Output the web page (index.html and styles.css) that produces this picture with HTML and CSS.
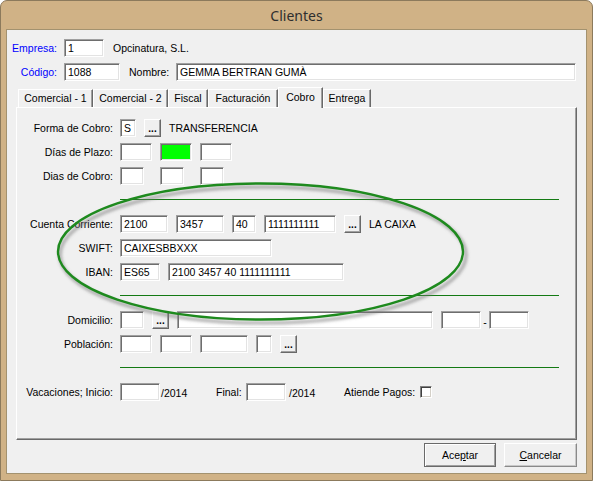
FILE: index.html
```html
<!DOCTYPE html>
<html lang="es">

<head>
    <meta charset="UTF-8">
    <meta name="viewport" content="width=device-width, initial-scale=1.0">
    <title>Clientes</title>
    <link rel="stylesheet" href="styles.css">
</head>

<body>
    <div class="window">
        <div class="titlebar">Clientes</div>
        <div class="client">
            <div class="head-row">
                <span class="head-label">Empresa:</span>
                <div class="field w40">1</div>
                <span class="note">Opcinatura, S.L.</span>
            </div>
            <div class="head-row">
                <span class="head-label">Código:</span>
                <div class="field w56">1088</div>
                <span class="name-label">Nombre:</span>
                <div class="field w400">GEMMA BERTRAN GUMÀ</div>
            </div>

            <div class="tabs">
                <div class="tab t75">Comercial - 1</div>
                <div class="tab t75">Comercial - 2</div>
                <div class="tab t40">Fiscal</div>
                <div class="tab t70">Facturación</div>
                <div class="tab t45 active">Cobro</div>
                <div class="tab t48">Entrega</div>
            </div>

            <div class="panel">
                <!-- forma de pago -->
                <div class="row">
                    <span class="lbl">Forma de Cobro:</span>
                    <div class="field w16">S</div>
                    <div class="dots">...</div>
                    <span>TRANSFERENCIA</span>
                </div>
                <div class="row">
                    <span class="lbl">Días de Plazo:</span>
                    <div class="field w32"></div>
                    <div class="field w32 green"></div>
                    <div class="field w32"></div>
                </div>
                <div class="row">
                    <span class="lbl">Dias de Cobro:</span>
                    <div class="field w24"></div>
                    <div class="field w24 skip"></div>
                    <div class="field w24 skip"></div>
                </div>
                <div class="rule"></div>

                <!-- datos bancarios -->
                <div class="row">
                    <span class="lbl">Cuenta Corriente:</span>
                    <div class="field w48">2100</div>
                    <div class="field w48">3457</div>
                    <div class="field w24">40</div>
                    <div class="field w72">1111111111</div>
                    <div class="dots">...</div>
                    <span>LA CAIXA</span>
                </div>
                <div class="row">
                    <span class="lbl">SWIFT:</span>
                    <div class="field w152">CAIXESBBXXX</div>
                </div>
                <div class="row">
                    <span class="lbl">IBAN:</span>
                    <div class="field w40">ES65</div>
                    <div class="field w176">2100 3457 40 1111111111</div>
                </div>
                <div class="rule"></div>

                <!-- direccion -->
                <div class="row">
                    <span class="lbl">Domicilio:</span>
                    <div class="field w24"></div>
                    <div class="dots">...</div>
                    <div class="field w256"></div>
                    <div class="field w40"></div>
                    <span class="dash">-</span>
                    <div class="field w40"></div>
                </div>
                <div class="row">
                    <span class="lbl">Población:</span>
                    <div class="field w32"></div>
                    <div class="field w32"></div>
                    <div class="field w48"></div>
                    <div class="field w16"></div>
                    <div class="dots">...</div>
                </div>
                <div class="rule"></div>

                <div class="row tight">
                    <span class="lbl">Vacaciones; Inicio:</span>
                    <div class="field w40"></div>
                    <span class="year">/2014</span>
                    <span class="final-lbl">Final:</span>
                    <div class="field w40"></div>
                    <span class="year year2">/2014</span>
                    <span class="pagos-lbl">Atiende Pagos:</span>
                    <div class="check"></div>
                </div>

                <svg class="mark" width="561" height="331" viewBox="0 0 561 331">
                    <defs>
                        <filter id="soft" x="-10%" y="-30%" width="120%" height="160%">
                            <feGaussianBlur stdDeviation="1.6" />
                        </filter>
                    </defs>
                    <ellipse cx="246" cy="147" rx="203" ry="68" fill="none" stroke="#777" stroke-opacity="0.55" stroke-width="3.5" filter="url(#soft)" />
                    <ellipse cx="243.5" cy="143.5" rx="202.5" ry="68" fill="none" stroke="#1e8a1e" stroke-width="2.4" />
                </svg>
            </div>

            <div class="buttons">
                <div class="btn default">Ace<u>p</u>tar</div>
                <div class="btn wide-btn"><u>C</u>ancelar</div>
            </div>
        </div>
    </div>
</body>

</html>
```

FILE: styles.css
```css
* {
    box-sizing: border-box;
}

body {
    margin: 0;
    font-family: "Liberation Sans", Arial, sans-serif;
    font-size: 10.5px;
    color: #000;
    background: #fff;
}

.window {
    width: 593px;
    height: 481px;
    background-color: #d0b286;
    border: 1px solid #8c7a5c;
    border-radius: 7px 7px 0 0;
    padding: 0 5px;
}

.titlebar {
    height: 28px;
    line-height: 30px;
    text-align: center;
    font-family: "Noto Sans", sans-serif;
    font-size: 14px;
    color: #2e2e2e;
}

.client {
    height: 445px;
    background-color: #f0f0f0;
    border: 1px solid #a3926f;
    padding-top: 9px;
}

/* top fields: empresa / codigo */

.head-row {
    display: flex;
    align-items: center;
    height: 18px;
    margin-bottom: 6px;
}

.head-label {
    width: 50px;
    margin-right: 7px;
    text-align: right;
    color: #0000ff;
}

.note {
    margin-left: 9px;
}

.name-label {
    width: 40px;
    margin-left: 9px;
    margin-right: 7px;
}

/* text boxes */

.field {
    height: 18px;
    background-color: #fff;
    border: 1px solid;
    border-color: #a0a0a0 #fff #fff #a0a0a0;
    box-shadow: inset 1px 1px 0 #6e6e6e, inset -1px -1px 0 #e3e3e3;
    padding: 0 3px;
    line-height: 16px;
    white-space: nowrap;
    overflow: hidden;
    flex-shrink: 0;
}

.field.green {
    background-color: #00ff00;
}

.field.skip {
    margin-left: 8px;
}

.w16 { width: 16px; }
.w24 { width: 24px; }
.w32 { width: 32px; }
.w40 { width: 40px; }
.w48 { width: 48px; }
.w56 { width: 56px; }
.w72 { width: 72px; }
.w152 { width: 152px; }
.w176 { width: 176px; }
.w256 { width: 256px; }
.w400 { width: 400px; }

.dots {
    width: 17px;
    height: 18px;
    background-color: #f0f0f0;
    border: 1px solid;
    border-color: #fff #696969 #696969 #fff;
    box-shadow: inset -1px -1px 0 #a0a0a0;
    font-weight: bold;
    font-size: 10px;
    line-height: 17px;
    text-align: center;
    flex-shrink: 0;
}

/* tabs */

.tabs {
    display: flex;
    align-items: flex-end;
    height: 20px;
    margin-left: 9px;
    padding-left: 2px;
}

.tab {
    height: 18px;
    line-height: 17px;
    text-align: center;
    border-top: 1px solid #fff;
    border-left: 1px solid #fff;
    border-right: 1px solid #696969;
    box-shadow: inset -1px 0 0 #a0a0a0;
    white-space: nowrap;
}

.tab.active {
    height: 21px;
    margin-bottom: -1px;
    line-height: 19px;
    background-color: #f0f0f0;
    position: relative;
    z-index: 1;
}

.t40 { width: 40px; }
.t45 { width: 45px; }
.t48 { width: 48px; }
.t70 { width: 70px; }
.t75 { width: 75px; }

.panel {
    position: relative;
    margin-left: 9px;
    width: 561px;
    height: 333px;
    border: 1px solid;
    border-color: #fff #696969 #696969 #fff;
    box-shadow: inset -1px -1px 0 #a0a0a0;
    padding-top: 11px;
}

.row {
    display: flex;
    align-items: center;
    gap: 8px;
    height: 18px;
    margin-bottom: 6px;
}

.row.tight {
    gap: 0;
}

.lbl {
    width: 96px;
    margin-right: -1px;
    text-align: right;
    white-space: nowrap;
}

.row.tight .lbl {
    margin-right: 7px;
}

.dash {
    width: 8px;
    margin: 4px -8px 0;
    text-align: center;
}

.year {
    width: 55px;
    margin-left: 1px;
    margin-top: 2px;
}

.year2 {
    margin-left: 3px;
}

.final-lbl {
    width: 30px;
}

.pagos-lbl {
    width: 76px;
}

.check {
    width: 12px;
    height: 12px;
    background-color: #fff;
    border: 1px solid;
    border-color: #808080 #fff #fff #808080;
    box-shadow: inset 1px 1px 0 #404040, inset -1px -1px 0 #d4d0c8;
}

/* the row above leaves 6px, the larger margin wins */
.rule {
    height: 1px;
    width: 439px;
    margin: 14px 0 15px 103px;
    background-color: #137a13;
}

.mark {
    position: absolute;
    left: 0;
    top: 0;
    overflow: visible;
    pointer-events: none;
}

/* dialog buttons */

.buttons {
    display: flex;
    justify-content: flex-end;
    gap: 8px;
    width: 561px;
    margin: 3px 0 0 9px;
}

.btn {
    width: 72px;
    height: 24px;
    line-height: 22px;
    text-align: center;
    background-color: #f0f0f0;
    border: 1px solid;
    border-color: #fff #8a8a8a #8a8a8a #fff;
    box-shadow: inset -1px -1px 0 #c8c8c8;
}

.btn.default {
    border-color: #6a6a6a;
    box-shadow: inset 1px 1px 0 #fff, inset -1px -1px 0 #a0a0a0;
}

.btn.wide-btn {
    width: 73px;
}
```
